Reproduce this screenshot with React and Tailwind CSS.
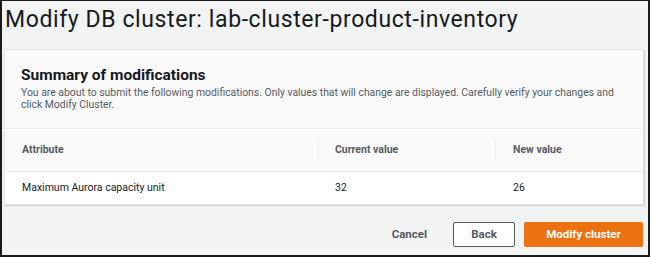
const rows = [
    {attribute: "Maximum Aurora capacity unit", current: "32", next: "26"},
];

const App = () => {
    return (
        <div className="w-[650px] h-[257px] overflow-hidden bg-[#f2f3f3] border-x-2 border-b-2 border-t border-[#1b1b1b] font-['Roboto',sans-serif]">
            <h1 className="pl-[3px] pt-[5px] text-[23px] leading-[28px] tracking-[0.6px] text-[#16191f] font-normal">
                Modify DB cluster: lab-cluster-product-inventory
            </h1>

            <div className="mt-[15px] ml-[2px] w-[640px] border border-[#e1e4e4] bg-white shadow-[1px_1px_1px_rgba(0,0,0,0.12)]">
                <div className="bg-[#fafafa] px-[16px] pt-[16px] pb-[17px] border-b border-[#eaeded]">
                    <h2 className="text-[15.5px] leading-[18px] font-bold text-[#16191f]">
                        Summary of modifications
                    </h2>
                    <p className="mt-[3px] text-[10.4px] leading-[12px] text-[#545b64]">
                        You are about to submit the following modifications. Only values that will change are displayed. Carefully verify your changes and click Modify Cluster.
                    </p>
                </div>

                <div className="grid grid-cols-[313px_177px_1fr] bg-[#fafafa] border-b border-[#eaeded] h-[43px] items-center text-[10.5px] font-bold text-[#545b64]">
                    <div className="pl-[17px]">Attribute</div>
                    <div className="flex items-center h-[20px] border-l border-[#eaeded] pl-[16px]">Current value</div>
                    <div className="flex items-center h-[20px] border-l border-[#eaeded] pl-[17px]">New value</div>
                </div>

                {rows.map((row) => (
                    <div key={row.attribute} className="grid grid-cols-[313px_177px_1fr] h-[32px] items-center text-[10.5px] text-[#16191f]">
                        <div className="pl-[17px]">{row.attribute}</div>
                        <div className="pl-[17px]">{row.current}</div>
                        <div className="pl-[18px]">{row.next}</div>
                    </div>
                ))}
            </div>

            <div className="mt-[17px] pr-[5px] flex justify-end items-center text-[11.5px] font-bold">
                <button className="h-[25px] px-[14px] text-[#545b64]">Cancel</button>
                <button className="ml-[12px] h-[25px] w-[62px] border border-[#545b64] rounded-[2px] bg-white text-[#545b64]">Back</button>
                <button className="ml-[9px] h-[25px] w-[119px] rounded-[2px] bg-[#ec7211] text-white">Modify cluster</button>
            </div>
        </div>
    );
};

export default App;
